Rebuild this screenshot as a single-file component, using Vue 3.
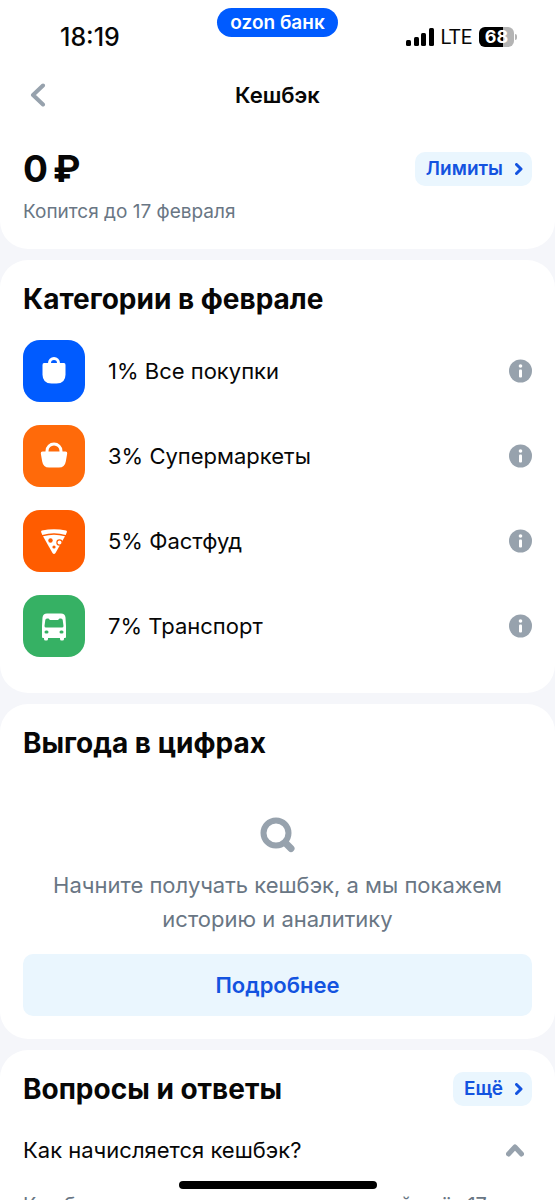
<script setup>
import { ref } from 'vue'

const categories = [
  { id: 'all', label: '1% Все покупки' },
  { id: 'market', label: '3% Супермаркеты' },
  { id: 'food', label: '5% Фастфуд' },
  { id: 'bus', label: '7% Транспорт' }
]

const answerOpen = ref(true)
</script>

<template>
  <div class="screen">
    <section class="card top">
      <div class="status">
        <span class="time">18:19</span>
        <span class="pill">ozon банк</span>
        <div class="signals">
          <svg class="bars" viewBox="0 0 28 18" aria-hidden="true">
            <rect x="0" y="12" width="5" height="6" rx="1.5" />
            <rect x="8" y="9" width="5" height="9" rx="1.5" />
            <rect x="15" y="5" width="5" height="13" rx="1.5" />
            <rect x="23" y="0" width="5" height="18" rx="1.5" />
          </svg>
          <span class="lte">LTE</span>
          <span class="battery">68</span>
        </div>
      </div>

      <header class="nav">
        <button type="button" class="back" aria-label="Назад">
          <svg viewBox="0 0 16 24" aria-hidden="true"><path d="M13 2.500 3 12l10 9.500" /></svg>
        </button>
        <h1>Кешбэк</h1>
      </header>

      <div class="balance">
        <div>
          <p class="amount"><span>0</span><span>₽</span></p>
          <p class="until">Копится до 17 февраля</p>
        </div>
        <a class="chip" href="#limits">
          Лимиты
          <svg viewBox="0 0 8 12" aria-hidden="true"><path d="m1.500 1.500 4.500 4.500-4.500 4.500" /></svg>
        </a>
      </div>
    </section>

    <section class="card">
      <h2>Категории в феврале</h2>
      <ul class="categories">
        <li v-for="c in categories" :key="c.id">
          <span class="tile" :class="c.id">
            <svg viewBox="0 0 62 62" aria-hidden="true">
              <template v-if="c.id === 'all'">
                <path class="line" d="M26.500 25v-2a4.500 4.500 0 0 1 9 0V25" />
                <path d="M21 23h20q1.500 0 1.500 2v9.500q0 9-9 9h-5q-9 0-9-9V25q0-2 1.500-2z" />
              </template>
              <template v-else-if="c.id === 'market'">
                <path class="line" d="M24 27.500v-1.500a7 7 0 0 1 14 0V27.500" />
                <path d="M19.500 26.500h23q2 0 1.700 2l-1.400 8q-1 6-6.800 6H26q-5.800 0-6.800-6l-1.400-8q-.3-2 1.700-2z" />
              </template>
              <template v-else-if="c.id === 'food'">
                <path d="M19 20.500q12-2.500 24 0 1.200.3.900 1.600l-1.200 2.900Q31 21.500 19.300 25l-1.200-2.900q-.3-1.300.9-1.600z" />
                <path d="M20 26.300q11-3 22 0L32.500 43q-1.500 2-3 0z" />
                <circle class="hole" cx="27.500" cy="30.500" r="2.200" />
                <circle class="ring" cx="36.500" cy="32.500" r="2.600" />
                <circle class="hole" cx="31" cy="37" r="1.600" />
              </template>
              <template v-else>
                <path d="M24 18.500h14q4 0 4.500 4L43 31v11q0 1-1 1h-1v1q0 1.500-1.500 1.500h-1Q37 45.500 37 44v-1H25v1q0 1.500-1.500 1.500h-1Q21 45.500 21 44v-1h-1q-1 0-1-1V31l.5-8.500q.5-4 4.500-4z" />
                <path class="hole" d="M24 23.500h1.500l1.500 1.500h8l1.500-1.500H38q1.500 0 1.700 1.500l.8 6q0 1.500-1.500 1.500H23q-1.500 0-1.500-1.500l.8-6q.2-1.500 1.700-1.500z" />
                <rect class="hole" x="21.500" y="35.500" width="4" height="3" rx="1.500" />
                <rect class="hole" x="36.500" y="35.500" width="4" height="3" rx="1.500" />
              </template>
            </svg>
          </span>
          <span class="label">{{ c.label }}</span>
          <button type="button" class="info" :aria-label="`Подробнее: ${c.label}`">
            <svg viewBox="0 0 24 24" aria-hidden="true">
              <circle cx="12.500" cy="12" r="11.500" />
              <circle class="mark" cx="12.500" cy="7" r="1.800" />
              <rect class="mark" x="11" y="10.500" width="3" height="8" rx="1" />
            </svg>
          </button>
        </li>
      </ul>
    </section>

    <section class="card benefit">
      <h2>Выгода в цифрах</h2>
      <svg class="search" viewBox="0 0 36 36" aria-hidden="true">
        <circle cx="16" cy="16" r="12.500" />
        <path class="handle" d="m26 26.500 5 5" />
      </svg>
      <p class="hint">Начните получать кешбэк, а мы покажем историю и аналитику</p>
      <button type="button" class="more">Подробнее</button>
    </section>

    <section class="card faq">
      <div class="faq-head">
        <h2>Вопросы и ответы</h2>
        <a class="chip" href="#faq">
          Ещё
          <svg viewBox="0 0 8 12" aria-hidden="true"><path d="m1.500 1.500 4.500 4.500-4.500 4.500" /></svg>
        </a>
      </div>
      <button
        type="button"
        class="question"
        :aria-expanded="answerOpen"
        @click="answerOpen = !answerOpen"
      >
        <span>Как начисляется кешбэк?</span>
        <svg :class="{ closed: !answerOpen }" viewBox="0 0 18 14" aria-hidden="true">
          <path d="m2.500 11 6.500-7 6.500 7" />
        </svg>
      </button>
      <p v-if="answerOpen" class="answer">Кешбэк начисляется на накопительный счёт 17 числа</p>
    </section>

    <div class="home-bar"></div>
  </div>
</template>

<style>
body {
  margin: 0;
  background: #f5f6fa;
}
</style>

<style scoped>
.screen {
  height: 100vh;
  overflow: hidden;
  display: flex;
  flex-direction: column;
  gap: 11px;
  background: #f5f6fa;
  color: #070707;
  font-family: Inter, "Noto Sans", sans-serif;
}
h1, h2, p, ul { margin: 0; }
button {
  padding: 0;
  border: 0;
  background: none;
  color: inherit;
  font: inherit;
  cursor: pointer;
}
svg { display: block; flex: none; }

.card {
  flex: none;
  padding: 21px 23px 34px;
  border-radius: 28px;
  background: #fff;
}
.card.top {
  padding: 0 23px 23px;
  border-radius: 0 0 28px 28px;
}
h2 {
  font-size: 28px;
  line-height: 36px;
  font-weight: 700;
}

.status {
  display: grid;
  grid-template-columns: 1fr auto 1fr;
  align-items: start;
  height: 64px;
  padding-top: 8px;
  box-sizing: border-box;
}
.time {
  padding: 14px 0 0 37px;
  font-size: 25px;
  line-height: 30px;
  font-weight: 500;
}
.pill {
  padding: 0 13px;
  border-radius: 15px;
  background: #005bff;
  color: #fff;
  font-size: 19px;
  line-height: 29px;
  font-weight: 600;
}
.signals {
  display: flex;
  justify-content: flex-end;
  align-items: center;
  gap: 7px;
  padding: 14px 18px 0 0;
  line-height: 30px;
}
.bars { width: 28px; height: 18px; }
.lte {
  font-family: Roboto, sans-serif;
  font-size: 20px;
}
.battery {
  position: relative;
  width: 35px;
  border-radius: 6px;
  background: linear-gradient(90deg, #000 68%, #b4b4b4 68%);
  color: #fff;
  font-size: 18px;
  line-height: 20px;
  font-weight: 700;
  text-align: center;
}
.battery::after {
  content: "";
  position: absolute;
  top: 7px;
  right: -3px;
  width: 2px;
  height: 6px;
  border-radius: 0 2px 2px 0;
  background: #b4b4b4;
}

.nav {
  display: grid;
  grid-template-columns: 32px 1fr 32px;
  align-items: center;
  height: 62px;
}
.back svg {
  width: 16px;
  height: 24px;
  margin-left: 7px;
  fill: none;
  stroke: #97a2ad;
  stroke-width: 4;
  stroke-linecap: round;
  stroke-linejoin: round;
}
h1 {
  font-size: 22px;
  line-height: 30px;
  font-weight: 600;
  text-align: center;
}

.balance {
  display: flex;
  justify-content: space-between;
  align-items: flex-start;
  padding-top: 22px;
}
.amount {
  display: flex;
  gap: 5px;
  font-size: 37px;
  line-height: 42px;
  font-weight: 700;
}
.until {
  padding-top: 8px;
  color: #697684;
  font-size: 19px;
  line-height: 28px;
}
.chip {
  display: flex;
  align-items: center;
  gap: 12px;
  padding: 0 9px 0 11px;
  border-radius: 10px;
  background: #eaf6fe;
  color: #1353e0;
  font-size: 19px;
  line-height: 34px;
  font-weight: 600;
  text-decoration: none;
}
.balance .chip { margin-top: 4px; }
.chip svg {
  width: 8px;
  height: 12px;
  fill: none;
  stroke: currentColor;
  stroke-width: 3;
  stroke-linecap: round;
  stroke-linejoin: round;
}

.categories {
  display: flex;
  flex-direction: column;
  gap: 23px;
  margin-top: 23px;
  padding: 0;
  list-style: none;
}
.categories li {
  display: flex;
  align-items: center;
}
.tile {
  width: 62px;
  height: 62px;
  border-radius: 17px;
  background: var(--tint);
}
.tile.all { --tint: #005bff; }
.tile.market { --tint: #ff6a0a; }
.tile.food { --tint: #ff5c00; }
.tile.bus { --tint: #36b164; }
.tile svg { fill: #fff; }
.tile .hole { fill: var(--tint); }
.tile .line {
  fill: none;
  stroke: #fff;
  stroke-width: 3;
}
.tile .ring {
  fill: #fff;
  stroke: var(--tint);
  stroke-width: 1.2;
}
.label {
  flex: 1;
  padding-left: 23px;
  font-size: 22px;
  line-height: 30px;
}
.info svg {
  width: 24px;
  height: 24px;
  fill: #97a2ad;
}
.info .mark { fill: #fff; }

.card:nth-child(2) { padding-bottom: 36px; }

.benefit { padding-bottom: 23px; }
.search {
  width: 36px;
  height: 36px;
  margin: 56px auto 0;
  fill: none;
  stroke: #97a2ad;
  stroke-width: 6;
  stroke-linecap: round;
}
.search .handle { stroke-width: 7; }
.hint {
  margin: 15px auto 0;
  max-width: 470px;
  color: #697684;
  font-size: 22px;
  line-height: 34px;
  text-align: center;
}
.more {
  width: 100%;
  margin-top: 18px;
  border-radius: 10px;
  background: #eaf6fe;
  color: #1353e0;
  font-size: 22px;
  line-height: 62px;
  font-weight: 600;
}

.faq-head {
  display: flex;
  justify-content: space-between;
  align-items: center;
}
.question {
  display: flex;
  justify-content: space-between;
  align-items: center;
  width: 100%;
  margin-top: 28px;
  padding-right: 8px;
  font-size: 22px;
  line-height: 30px;
  text-align: left;
}
.question svg {
  width: 18px;
  height: 14px;
  fill: none;
  stroke: #97a2ad;
  stroke-width: 5;
  stroke-linecap: round;
  stroke-linejoin: round;
}
.question svg.closed { transform: rotate(180deg); }
.answer {
  margin-top: 23px;
  color: #697684;
  font-size: 20px;
  line-height: 34px;
}

.home-bar {
  position: fixed;
  bottom: 11px;
  left: 50%;
  width: 198px;
  height: 8px;
  margin-left: -99px;
  border-radius: 4px;
  background: #000;
}
</style>
